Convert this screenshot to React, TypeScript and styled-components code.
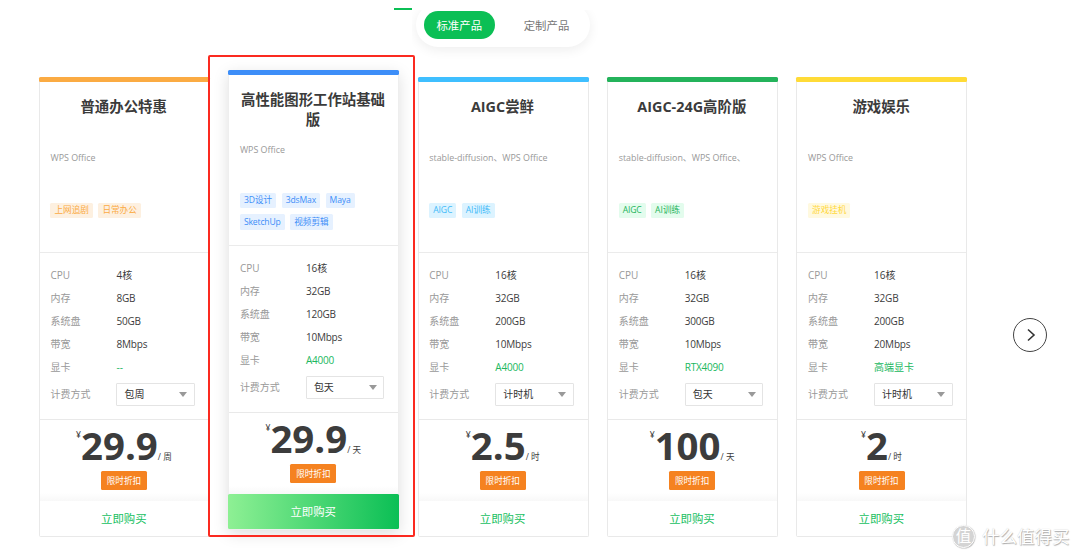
import React from "react";
import styled, { createGlobalStyle, css } from "styled-components";

const GlobalStyle = createGlobalStyle`
  * { box-sizing: border-box; }
  body { margin: 0; background: #fff; }
  body, button { font-family: "Open Sans", "Noto Sans CJK SC", sans-serif; }
`;

const Page = styled.main`
  position: relative;
  width: 1080px;
  height: 558px;
  overflow: hidden;
  background: #fff;
  color: #3c3c3c;
`;

const TopBar = styled.header`
  display: flex;
  height: 77px;
  padding: 8px 0 0 394px;
`;

const ActiveLine = styled.span`
  width: 18px;
  height: 2px;
  background: #0bbf55;
`;

const TabClip = styled.div`
  height: 67px;
  margin-top: 2px;
  padding: 0 20px 0 4px;
  overflow: hidden;
`;

const Tabs = styled.nav`
  display: flex;
  align-items: center;
  width: 174px;
  height: 44px;
  margin-top: -7px;
  padding: 0 9px 0 8px;
  border-radius: 22px;
  background: #fff;
  box-shadow: 0 3px 12px rgba(0, 0, 0, 0.07);
`;

const Tab = styled.button<{ $active?: boolean }>`
  height: 28px;
  width: ${(p) => (p.$active ? "70.5px" : "104px")};
  flex: none;
  padding: 1px 0 0;
  border: 0;
  border-radius: 14px;
  background: ${(p) => (p.$active ? "#0bbf55" : "transparent")};
  color: ${(p) => (p.$active ? "#fff" : "#777")};
  font-size: 11.4px;
  line-height: 27px;
`;

const Carousel = styled.section`
  display: flex;
  align-items: flex-start;
  padding-left: 38.8px;
`;

const CardList = styled.div`
  display: flex;
  gap: 18.4px;
`;

const Card = styled.article<{ $featured?: boolean }>`
  display: flex;
  flex-direction: column;
  width: 171px;
  height: 460px;
  border: 1px solid #e9e9e9;
  border-top: 0;
  border-radius: 2px;
  background: #fff;
  ${(p) =>
    p.$featured &&
    css`
      margin-top: -7px;
      margin-bottom: 7px;
      border-color: #eee;
      box-shadow: 0 4px 16px rgba(0, 0, 0, 0.13);
    `}
`;

const Stripe = styled.div<{ $color: string }>`
  height: 4.5px;
  margin: 0 -1px;
  flex: none;
  border-radius: 1.5px;
  background: ${(p) => p.$color};
`;

const Summary = styled.div`
  height: 171.5px;
  padding: 15px 11px 0 10.7px;
  border-bottom: 1px solid #ebebeb;
`;

const Title = styled.h2<{ $featured?: boolean }>`
  height: ${(p) => (p.$featured ? "53px" : "54px")};
  margin: 0 -5px 0 -6px;
  padding: 0 5px;
  color: #3b3b3b;
  font-size: 14.4px;
  font-weight: 700;
  line-height: 20.6px;
  text-align: center;
`;

const Description = styled.p<{ $featured?: boolean }>`
  height: ${(p) => (p.$featured ? "50px" : "52px")};
  margin: 0;
  color: #999;
  font-size: 8.9px;
  line-height: 14px;
  white-space: nowrap;
`;

const Tags = styled.div`
  display: flex;
  flex-wrap: wrap;
  gap: 6px 5.5px;
`;

const Tag = styled.span<{ $color: string; $tint: string; $latin: boolean }>`
  height: 15.7px;
  padding: 0.5px 4px 0;
  border-radius: 1.5px;
  background: ${(p) => p.$tint};
  color: ${(p) => p.$color};
  font-size: 8.6px;
  letter-spacing: ${(p) => (p.$latin ? "-0.15px" : "0")};
  line-height: 15.7px;
  white-space: nowrap;
`;

const Specs = styled.div`
  height: 167px;
  padding: 11.3px 11px 0 10.7px;
  border-bottom: 1px solid #e9e9e9;
`;

const SpecRow = styled.div<{ $select?: boolean }>`
  display: flex;
  align-items: center;
  height: ${(p) => (p.$select ? "31.4px" : "22.9px")};
  font-size: 10px;
  line-height: 15px;
`;

const Label = styled.span`
  width: 66px;
  flex: none;
  color: #999;
`;

const Value = styled.span<{ $gpu?: boolean; $latin: boolean }>`
  color: ${(p) => (p.$gpu ? "#20b75e" : "#3c3c3c")};
  font-size: 10px;
  letter-spacing: ${(p) => (p.$latin ? "-0.2px" : "0")};
`;

const Select = styled.div`
  display: flex;
  align-items: center;
  justify-content: space-between;
  width: 78.5px;
  height: 23px;
  padding: 0 6.5px 0 7px;
  border: 1px solid #e4e4e4;
  border-radius: 1px;
  color: #333;
`;

const Caret = styled.span`
  border: 4px solid transparent;
  border-top: 5px solid #999;
  border-bottom: 0;
`;

const PriceArea = styled.div`
  display: flex;
  flex-direction: column;
  align-items: center;
  height: 80.6px;
  padding-right: 0.7px;
  flex: none;
  background: linear-gradient(#fff 0 73px, #f8f8f8 100%);
`;

const Price = styled.div`
  display: flex;
  align-items: flex-start;
  height: 51.3px;
  color: #3c3c3c;
  font-size: 8.6px;
`;

const Currency = styled.span`
  padding-top: 8.5px;
  line-height: 12px;
`;

const Amount = styled.strong`
  font-size: 38.4px;
  font-weight: 700;
  line-height: 51px;
`;

const Period = styled.span`
  padding-top: 30px;
  line-height: 14px;
  white-space: pre;
`;

const Discount = styled.span`
  width: 46px;
  height: 19px;
  padding-top: 0.5px;
  border-radius: 1.5px;
  background: #f58220;
  color: #fff;
  font-size: 8.6px;
  line-height: 19px;
  text-align: center;
`;

const BuyButton = styled.button<{ $featured?: boolean }>`
  flex: 1;
  padding: 1px 1px 0 0;
  border: 0;
  background: #fff;
  color: #20bf62;
  font-size: 11.4px;
  line-height: 34px;
  ${(p) =>
    p.$featured &&
    css`
      margin: 0 -1px;
      border-radius: 1.5px;
      background: linear-gradient(90deg, #8ef094, #0bbf55);
      color: #fff;
    `}
`;

const NextButton = styled.button`
  display: grid;
  place-items: center;
  width: 34px;
  height: 34px;
  margin: 241.3px 0 0 45.3px;
  padding: 0;
  border: 1px solid #444;
  border-radius: 50%;
  background: #fff;
`;

const Highlight = styled.div`
  position: absolute;
  left: 208px;
  top: 55px;
  width: 206.5px;
  height: 482px;
  border: 2px solid #fb2a20;
  border-radius: 2px;
`;

const Watermark = styled.div`
  position: absolute;
  left: 952px;
  top: 524px;
  display: flex;
  align-items: center;
  gap: 7px;
  height: 24px;
  color: #fff;
  font-size: 17.5px;
  line-height: 24px;
  text-shadow: 0.7px 0.7px 1px #aaa, 0 0 1px #ccc;
  white-space: nowrap;
`;

const Seal = styled.span`
  width: 23px;
  height: 23px;
  border: 1px solid #fff;
  border-radius: 50%;
  box-shadow: 0.5px 0.5px 1px #bbb;
  background: #d4d4d4;
  font-size: 15.5px;
  line-height: 20px;
  text-align: center;
  text-shadow: none;
`;

interface Product {
  title: string;
  apps: string;
  tags: string[];
  color: string;
  tagColor: string;
  tint: string;
  specs: string[];
  billing: string;
  price: string;
  unit: string;
  featured?: boolean;
}

const labels = ["CPU", "内存", "系统盘", "带宽", "显卡"];

const isLatin = (text: string) => /^\w+$/.test(text);

const products: Product[] = [
  { title: "普通办公特惠", apps: "WPS Office", tags: ["上网追剧", "日常办公"], color: "#fbab43", tagColor: "#fbab43", tint: "#fdf0e0", specs: ["4核", "8GB", "50GB", "8Mbps", "--"], billing: "包周", price: "29.9", unit: "周" },
  { title: "高性能图形工作站基础版", apps: "WPS Office", tags: ["3D设计", "3dsMax", "Maya", "SketchUp", "视频剪辑"], color: "#3d8ef8", tagColor: "#3d8ef8", tint: "#e6f1ff", specs: ["16核", "32GB", "120GB", "10Mbps", "A4000"], billing: "包天", price: "29.9", unit: "天", featured: true },
  { title: "AIGC尝鲜", apps: "stable-diffusion、WPS Office", tags: ["AIGC", "AI训练"], color: "#3fbfff", tagColor: "#3fbaf8", tint: "#dcf3ff", specs: ["16核", "32GB", "200GB", "10Mbps", "A4000"], billing: "计时机", price: "2.5", unit: "时" },
  { title: "AIGC-24G高阶版", apps: "stable-diffusion、WPS Office、", tags: ["AIGC", "AI训练"], color: "#24b35b", tagColor: "#24b35b", tint: "#e3fced", specs: ["16核", "32GB", "300GB", "10Mbps", "RTX4090"], billing: "包天", price: "100", unit: "天" },
  { title: "游戏娱乐", apps: "WPS Office", tags: ["游戏挂机"], color: "#ffdb37", tagColor: "#ffd83d", tint: "#fff9df", specs: ["16核", "32GB", "200GB", "20Mbps", "高端显卡"], billing: "计时机", price: "2", unit: "时" },
];

function ProductCard({ product: p }: { product: Product }) {
  return (
    <Card $featured={p.featured}>
      <Stripe $color={p.color} />
      <Summary>
        <Title $featured={p.featured}>{p.title}</Title>
        <Description $featured={p.featured}>{p.apps}</Description>
        <Tags>
          {p.tags.map((tag) => (
            <Tag key={tag} $color={p.tagColor} $tint={p.tint} $latin={isLatin(tag)}>{tag}</Tag>
          ))}
        </Tags>
      </Summary>
      <Specs>
        {labels.map((label, i) => (
          <SpecRow key={label}>
            <Label>{label}</Label>
            <Value $gpu={i === 4} $latin={isLatin(p.specs[i])}>{p.specs[i]}</Value>
          </SpecRow>
        ))}
        <SpecRow $select>
          <Label>计费方式</Label>
          <Select>{p.billing}<Caret /></Select>
        </SpecRow>
      </Specs>
      <PriceArea>
        <Price>
          <Currency>¥</Currency>
          <Amount>{p.price}</Amount>
          <Period>{`/ ${p.unit}`}</Period>
        </Price>
        <Discount>限时折扣</Discount>
      </PriceArea>
      <BuyButton $featured={p.featured}>立即购买</BuyButton>
    </Card>
  );
}

export default function App() {
  return (
    <Page>
      <GlobalStyle />
      <TopBar>
        <ActiveLine />
        <TabClip>
          <Tabs>
            <Tab $active>标准产品</Tab>
            <Tab>定制产品</Tab>
          </Tabs>
        </TabClip>
      </TopBar>
      <Carousel>
        <CardList>
          {products.map((p) => <ProductCard key={p.title} product={p} />)}
        </CardList>
        <NextButton aria-label="下一页">
          <svg width="14" height="14" viewBox="0 0 14 14" fill="none" stroke="#333" strokeWidth="1.6">
            <path d="M5 1.5 11 7l-6 5.5" />
          </svg>
        </NextButton>
      </Carousel>
      <Highlight />
      <Watermark><Seal>值</Seal>什么值得买</Watermark>
    </Page>
  );
}
